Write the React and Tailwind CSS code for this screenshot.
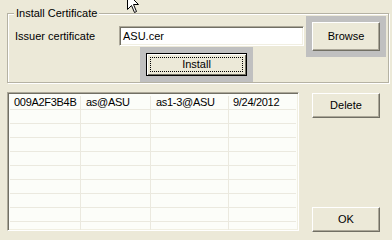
import React from 'react';

const rows = [
  ['009A2F3B4B', 'as@ASU', 'as1-3@ASU', '9/24/2012'],
  ['', '', '', ''],
  ['', '', '', ''],
  ['', '', '', ''],
  ['', '', '', ''],
  ['', '', '', ''],
  ['', '', '', ''],
  ['', '', '', ''],
  ['', '', '', ''],
  ['', '', '', ''],
];

const sunken =
  'border border-t-[#aca899] border-l-[#aca899] border-b-white border-r-white shadow-[inset_1px_1px_0_#716f64,inset_-1px_-1px_0_#f1efe2]';

const Button = ({ children, className = '' }) => (
  <button
    className={`flex items-center justify-center bg-[#ece9d8] border border-t-white border-l-white border-r-[#716f64] border-b-[#716f64] shadow-[inset_-1px_-1px_0_#aca899] text-[11px] leading-[13px] text-black ${className}`}
  >
    {children}
  </button>
);

export default function App() {
  return (
    <div
      className="relative w-[392px] h-[240px] overflow-hidden bg-[#ece9d8] text-[11px] leading-[13px] text-black"
      style={{ fontFamily: '"Liberation Sans", Arial, sans-serif' }}
    >
      {/* group box */}
      <div className="relative ml-[7px] mt-[13px] w-[382px] h-[70px] border border-[#b5b2a3] shadow-[inset_1px_1px_0_#fff,1px_1px_0_#fff]">
        <span className="absolute left-[6px] -top-[7px] px-[2px] bg-[#ece9d8]">Install Certificate</span>

        <div className="flex items-start mt-[2px]">
          <div className="ml-[7px] mt-[10px] w-[104px] h-[20px] flex items-center">Issuer certificate</div>
          <div className={`mt-[10px] w-[185px] h-[20px] bg-white flex items-center pl-[3px] ${sunken}`}>ASU.cer</div>
          <div className="ml-[2px] -mb-[10px] border-[6px] border-[#c0c0c0]">
            <Button className="w-[68px] h-[29px]">Browse</Button>
          </div>
        </div>

        <div className="ml-[132px] w-[113px] border-[6px] border-[#c0c0c0]">
          <button className="w-[101px] h-[23px] border border-black bg-[#ece9d8] shadow-[inset_1px_1px_0_#fff,inset_-1px_-1px_0_#716f64] p-[3px] flex">
            <span className="flex-1 flex items-center justify-center border border-dotted border-black text-[11px] leading-[13px]">
              Install
            </span>
          </button>
        </div>
      </div>

      {/* list + actions */}
      <div className="flex mt-[9px] ml-[7px]">
        <div className={`w-[292px] h-[139px] overflow-hidden bg-[#fcfdf9] p-[2px] ${sunken}`}>
          <div className="pt-[1px] tracking-[-0.3px]">
            {rows.map((r, i) => (
              <div key={i} className="flex h-[14px] border-b border-[#ebe9df]">
                <div className="w-[71px] pl-[4px] border-r border-[#ebe9df] leading-[13px] whitespace-nowrap">{r[0]}</div>
                <div className="w-[70px] pl-[5px] border-r border-[#ebe9df] leading-[13px] whitespace-nowrap">{r[1]}</div>
                <div className="w-[78px] pl-[5px] border-r border-[#ebe9df] leading-[13px] whitespace-nowrap">{r[2]}</div>
                <div className="flex-1 pl-[4px] leading-[13px] whitespace-nowrap">{r[3]}</div>
              </div>
            ))}
          </div>
        </div>

        <div className="ml-[13px] mt-[1px] h-[139px] flex flex-col justify-between">
          <Button className="w-[68px] h-[25px]">Delete</Button>
          <Button className="w-[68px] h-[25px]">OK</Button>
        </div>
      </div>

      {/* mouse pointer */}
      <svg className="absolute left-[127px] -top-[7px]" width="13" height="21" viewBox="0 0 13 21">
        <path d="M0.5 0.5 L0.5 16.5 L4.5 12.5 L7.5 19.5 L9.5 18.5 L6.5 11.5 L11.5 11.5 Z" fill="#fff" stroke="#000" strokeWidth="1" />
      </svg>
    </div>
  );
}
